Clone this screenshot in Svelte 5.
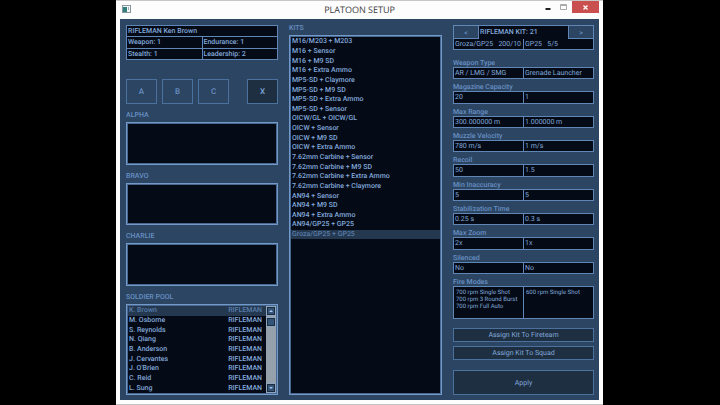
<script lang="ts">
    const kits = [
        'M16/M203 + M203',
        'M16 + Sensor',
        'M16 + M9 SD',
        'M16 + Extra Ammo',
        'MP5-SD + Claymore',
        'MP5-SD + M9 SD',
        'MP5-SD + Extra Ammo',
        'MP5-SD + Sensor',
        'OICW/GL + OICW/GL',
        'OICW + Sensor',
        'OICW + M9 SD',
        'OICW + Extra Ammo',
        '7.62mm Carbine + Sensor',
        '7.62mm Carbine + M9 SD',
        '7.62mm Carbine + Extra Ammo',
        '7.62mm Carbine + Claymore',
        'AN94 + Sensor',
        'AN94 + M9 SD',
        'AN94 + Extra Ammo',
        'AN94/GP25 + GP25',
        'Groza/GP25 + GP25'
    ]

    const soldiers = [
        'K. Brown',
        'M. Osborne',
        'S. Reynolds',
        'N. Qiang',
        'B. Anderson',
        'J. Cervantes',
        "J. O'Brien",
        'C. Reid',
        'L. Sung'
    ]

    const specs = [
        ['Weapon Type', 'AR / LMG / SMG', 'Grenade Launcher'],
        ['Magazine Capacity', '20', '1'],
        ['Max Range', '300.000000 m', '1.000000 m'],
        ['Muzzle Velocity', '780 m/s', '1 m/s'],
        ['Recoil', '50', '1.5'],
        ['Min Inaccuracy', '5', '5'],
        ['Stabilization Time', '0.25 s', '0.3 s'],
        ['Max Zoom', '2x', '1x'],
        ['Silenced', 'No', 'No']
    ]

    const squads = ['ALPHA', 'BRAVO', 'CHARLIE']

    let kit = $state(20)
    let soldier = $state(0)

    const step = (n: number) => {
        kit = (kit + n + kits.length) % kits.length
    }
</script>

<div class="window">
    <header>
        <svg class="app-icon" width="9" height="8" viewBox="0 0 9 8" aria-hidden="true">
            <rect x="0.5" y="0.5" width="8" height="7" fill="#f4f6f7" stroke="#8b979f" />
            <rect x="1" y="2" width="4" height="5" fill="#2f7f7c" />
            <rect x="6" y="2" width="1" height="3" fill="#9fb0b8" />
        </svg>
        <h1>PLATOON SETUP</h1>
        <div class="controls">
            <button class="ctl" aria-label="Minimize">
                <svg width="6" height="10" viewBox="0 0 6 10"><path d="M0.5 7h5" stroke="#222" stroke-width="2" /></svg>
            </button>
            <button class="ctl" aria-label="Maximize">
                <svg width="8" height="7" viewBox="0 0 8 7"><path d="M0.5 0.5h6v5h-6zM0.5 1.5h6" fill="none" stroke="#aaa" /></svg>
            </button>
            <button class="ctl close" aria-label="Close">
                <svg width="5" height="5" viewBox="0 0 5 5"><path d="M0.5 0.5l4 4M4.5 0.5l-4 4" stroke="#fff" stroke-width="1.2" /></svg>
            </button>
        </div>
    </header>

    <main>
        <section class="roster">
            <table class="stats">
                <tbody>
                    <tr><th colspan="2">RIFLEMAN Ken Brown</th></tr>
                    <tr><td>Weapon: 1</td><td>Endurance: 1</td></tr>
                    <tr><td>Stealth: 1</td><td>Leadership: 2</td></tr>
                </tbody>
            </table>

            <div class="teams">
                <button class="team">A</button>
                <button class="team">B</button>
                <button class="team">C</button>
                <button class="team remove">X</button>
            </div>

            {#each squads as squad}
                <div class="squad">
                    <h2>{squad}</h2>
                    <div class="box"></div>
                </div>
            {/each}

            <h2>SOLDIER POOL</h2>
            <div class="box pool">
                <ul>
                    {#each soldiers as name, i}
                        <li>
                            <button class="row" class:selected={i === soldier} onclick={() => (soldier = i)}>
                                <span>{name}</span><span>RIFLEMAN</span>
                            </button>
                        </li>
                    {/each}
                </ul>
                <div class="scroll">
                    <button class="knob" aria-label="Scroll up">
                        <svg width="4" height="2" viewBox="0 0 4 2"><path d="M0 2l2-2 2 2z" fill="#a9c6ee" /></svg>
                    </button>
                    <div class="knob thumb"></div>
                    <button class="knob down" aria-label="Scroll down">
                        <svg width="4" height="2" viewBox="0 0 4 2"><path d="M0 0l2 2 2-2z" fill="#a9c6ee" /></svg>
                    </button>
                </div>
            </div>
        </section>

        <section class="kits">
            <h2>KITS</h2>
            <ul class="box">
                {#each kits as name, i}
                    <li>
                        <button class="row" class:selected={i === kit} onclick={() => (kit = i)}>{name}</button>
                    </li>
                {/each}
            </ul>
        </section>

        <section class="details">
            <div class="picker">
                <button onclick={() => step(-1)}>&lt;</button>
                <strong>RIFLEMAN KIT: {kit + 1}</strong>
                <button onclick={() => step(1)}>&gt;</button>
            </div>
            <div class="pair ammo">
                <span>Groza/GP25 &nbsp; 200/10</span>
                <span>GP25 &nbsp; 5/5</span>
            </div>

            <dl>
                {#each specs as [label, primary, secondary]}
                    <div class="spec">
                        <dt>{label}</dt>
                        <div class="pair">
                            <dd>{primary}</dd>
                            <dd>{secondary}</dd>
                        </div>
                    </div>
                {/each}
            </dl>

            <h3>Fire Modes</h3>
            <div class="pair modes">
                <div>
                    <p>700 rpm Single Shot</p>
                    <p>700 rpm 3 Round Burst</p>
                    <p>700 rpm Full Auto</p>
                </div>
                <div>
                    <p>600 rpm Single Shot</p>
                </div>
            </div>

            <div class="actions">
                <button>Assign Kit To Fireteam</button>
                <button>Assign Kit To Squad</button>
                <button class="apply">Apply</button>
            </div>
        </section>
    </main>
</div>

<style>
    :global(body) {
        background: #000;
    }

    :global(*) {
        box-sizing: border-box;
        margin: 0;
        padding: 0;
    }

    .window {
        --panel: #2c4563;
        --dark: #050b16;
        --button: #1e2f41;
        --edge: #7299c9;
        --line: #5f86b5;
        --dim: #4b719e;
        --text: #82a8da;
        --label: #678fc2;
        display: flex;
        flex-direction: column;
        min-height: 100vh;
        margin: 0 117px 0 116px;
        padding: 0 4px 4px;
        border-top: 1px solid #c8c6c6;
        border-bottom: 1px solid #c4c4c4;
        background: #fdfdfd;
        color: var(--text);
        font: 500 7px/10px Roboto, sans-serif;
        text-rendering: geometricPrecision;
    }

    button {
        border: none;
        background: none;
        color: inherit;
        font: inherit;
        text-rendering: inherit;
        cursor: pointer;
    }

    ul {
        list-style: none;
    }

    header {
        display: grid;
        grid-template-columns: 1fr auto 1fr;
        height: 18px;
    }

    .app-icon {
        margin: 4px 2px;
    }

    h1 {
        color: #3c3c3c;
        font: 400 9px/17px "Open Sans", sans-serif;
    }

    .controls {
        display: flex;
        justify-content: flex-end;
        height: 12px;
    }

    .ctl {
        display: flex;
        align-items: center;
        justify-content: center;
        width: 16px;
    }

    .ctl.close {
        width: 27px;
        background: #c9504f;
    }

    main {
        display: grid;
        flex: 1;
        grid-template-columns: 152fr 153fr 141fr;
        gap: 11px;
        padding: 6px 5px 5px 6px;
        background: var(--panel);
    }

    section {
        display: flex;
        flex-direction: column;
        min-width: 0;
    }

    h2 {
        height: 18px;
        color: var(--label);
        font-size: 7px;
        font-weight: 500;
        line-height: 22px;
    }

    .box {
        border: 1px solid var(--edge);
        background: var(--dark);
        outline: 1px solid #48688f;
        outline-offset: -2px;
    }

    .stats {
        width: 100%;
        height: 35px;
        margin-bottom: 19px;
        border-collapse: collapse;
        table-layout: fixed;
        background: var(--dark);
    }

    .stats th,
    .stats td {
        padding: 0 1px;
        border: 1px solid var(--line);
        font-weight: 500;
        text-align: left;
    }

    .teams {
        display: flex;
        gap: 5px;
    }

    .team {
        width: 31px;
        height: 25px;
        border: 1px solid var(--dim);
        color: var(--label);
        font-size: 8px;
    }

    .remove {
        margin-left: auto;
        background: var(--button);
        color: var(--text);
    }

    .squad {
        display: flex;
        flex: 1;
        flex-direction: column;
    }

    .squad .box {
        flex: 1;
    }

    .pool {
        display: flex;
        height: 91px;
        padding: 1px;
    }

    .pool ul {
        display: grid;
        flex: 1;
        grid-auto-rows: 1fr;
    }

    .row {
        display: flex;
        align-items: center;
        justify-content: space-between;
        width: 100%;
        height: 100%;
        padding: 0 4px 0 1px;
        line-height: 9px;
        white-space: nowrap;
    }

    .row.selected {
        background: #243850;
        color: #587ca9;
    }

    .scroll {
        display: flex;
        flex-direction: column;
        width: 10px;
        background: #94a1ad;
    }

    .knob {
        display: flex;
        align-items: center;
        justify-content: center;
        height: 10px;
        border: 1px solid #8fa6c0;
        outline: 1px solid #1d2c3d;
        outline-offset: -2px;
        background: #34547a;
    }

    .thumb {
        margin-top: 1px;
    }

    .down {
        margin-top: auto;
    }

    .kits h2 {
        height: 10px;
        line-height: 7px;
    }

    .kits ul {
        display: grid;
        flex: 1;
        grid-template-rows: repeat(36, 1fr);
        padding: 1px 1px 10px;
    }

    .picker {
        display: grid;
        grid-template-columns: 24px 1fr 24px;
        height: 14px;
        border: 1px solid var(--line);
    }

    .picker button {
        color: var(--label);
    }

    .picker strong {
        padding-left: 1px;
        border: 1px solid var(--line);
        border-width: 0 1px;
        background: var(--dark);
        font-weight: 500;
        line-height: 13px;
    }

    .pair {
        display: grid;
        flex: 1;
        grid-template-columns: 1fr 1fr;
        gap: 1px;
        border: 1px solid var(--line);
        background: var(--line);
        font-weight: 400;
    }

    .pair > * {
        padding-left: 1px;
        background: var(--dark);
        white-space: nowrap;
    }

    .pair.ammo {
        flex: none;
        height: 11px;
        margin-bottom: 5px;
        border-top: none;
    }

    dl {
        display: grid;
        flex: 1;
        grid-auto-rows: 1fr;
    }

    .spec {
        display: flex;
        flex-direction: column;
    }

    dt,
    h3 {
        height: 12px;
        color: var(--label);
        font-size: 7px;
        font-weight: 500;
        line-height: 16px;
    }

    .pair.modes {
        flex: none;
        height: 33px;
        margin-bottom: 9px;
        font-size: 6px;
        line-height: 7px;
    }

    .modes > div {
        padding: 2px;
    }

    .actions {
        display: flex;
        flex-direction: column;
        gap: 4px;
    }

    .actions button {
        height: 14px;
        border: 1px solid var(--dim);
        background: var(--button);
        font-weight: 400;
    }

    .actions .apply {
        height: 25px;
        margin-top: 6px;
    }
</style>
